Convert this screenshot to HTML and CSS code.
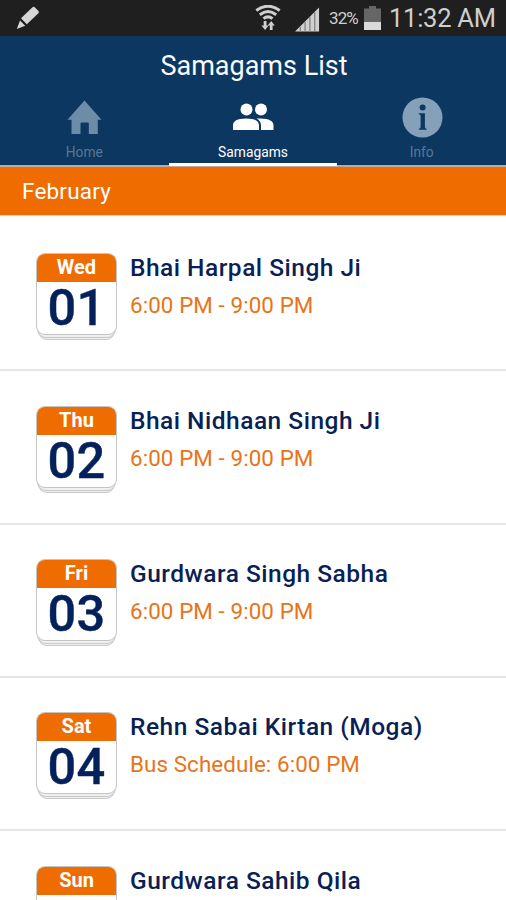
FILE: index.html
```html
<!DOCTYPE html>
<html lang="en">
<head>
  <meta charset="UTF-8" />
  <title>Samagams List</title>
  <link rel="stylesheet" href="styles.css">
</head>
<body>
  <div class="status-bar">
    <svg class="pencil" width="24" height="24" viewBox="0 0 24 24">
      <path d="M16.500 1.200Q17.800 .2 19 1.500L22.500 5Q23.400 6.200 22.400 7.300L10.800 18.300 5 12.300Z" fill="#d6d6d6"/>
      <path d="M4 14.600L9.200 19.700 0.800 23Z" fill="#d6d6d6"/>
    </svg>
    <svg class="wifi" width="26" height="26" viewBox="0 0 26 26">
      <g fill="none" stroke="#cfcfcf" stroke-width="3">
        <path d="M1.300 5.500Q13 -3 24.700 5.500"/>
        <path d="M4.800 9.700Q13 3.400 21.200 9.700"/>
        <path d="M8.500 13.700Q13 10 17.500 13.700"/>
      </g>
      <path d="M8.700 16h2.800v4.500h2.100L10.100 25 6.400 20.500H8.700ZM14.800 25h2.800v-4.500h2.200L16.200 16l-3.500 4.500H14.800Z" fill="#cfcfcf"/>
    </svg>
    <svg class="signal" width="25" height="25" viewBox="0 0 26 25">
      <path d="M0 25L25 0V25Z" fill="#cfcfcf"/>
      <path d="M5.500 20v5M10.500 15v10M15.500 10v15M20.500 5v20" stroke="#858585" stroke-width="1.400"/>
    </svg>
    <span class="percent">32%</span>
    <svg class="battery" width="17" height="24" viewBox="0 0 17 24">
      <path d="M5 0h7v2.500h5V24H0V2.500h5Z" fill="#666"/>
      <path d="M0 16h17v8H0Z" fill="#dadada"/>
    </svg>
    <span class="clock">11:32 AM</span>
  </div>

  <header>Samagams List</header>

  <nav class="tabs">
    <div class="tab">
      <svg width="40" height="42" viewBox="0 0 40 42">
        <path d="M20.500 3.500L37.500 22.700H33.800V37H24.800V26.500Q24.800 25.500 23.800 25.500H17.500Q16.500 25.500 16.500 26.500V37H7.500V22.700H3.500Z" fill="#6d8ca8"/>
      </svg>
      <span>Home</span>
    </div>
    <div class="tab active">
      <svg width="42" height="42" viewBox="0 0 42 42">
        <g fill="#fff">
          <circle cx="14.500" cy="12.500" r="6"/>
          <circle cx="29" cy="12.500" r="6"/>
          <path d="M1 33V28.500Q1 21.500 14 21.500T27 28.500V33Z"/>
          <path d="M24.500 21.600Q29 24 29 28.500V33H41.500V28.500Q41.500 21.800 28.500 21.500Z"/>
        </g>
      </svg>
      <span>Samagams</span>
    </div>
    <div class="tab">
      <svg width="42" height="42" viewBox="0 0 42 42">
        <circle cx="21.500" cy="20.500" r="20" fill="#85a0b9"/>
        <circle cx="21.600" cy="10.400" r="3" fill="#0c3761"/>
        <path d="M17.800 16.200H23.900V30Q23.900 31.500 25.600 31.700V32.700H17.800V31.700Q19.600 31.500 19.600 30V18.700Q19.600 17.500 17.800 17.300Z" fill="#0c3761"/>
      </svg>
      <span>Info</span>
    </div>
  </nav>

  <div class="month">February</div>

  <div class="list">
    <div class="item">
      <div class="calendar">
        <div class="page">
          <div class="day">Wed</div>
          <div class="date">01</div>
        </div>
      </div>
      <div class="details">
        <h3>Bhai Harpal Singh Ji</h3>
        <p>6:00 PM - 9:00 PM</p>
      </div>
    </div>
    <div class="item">
      <div class="calendar">
        <div class="page">
          <div class="day">Thu</div>
          <div class="date">02</div>
        </div>
      </div>
      <div class="details">
        <h3>Bhai Nidhaan Singh Ji</h3>
        <p>6:00 PM - 9:00 PM</p>
      </div>
    </div>
    <div class="item">
      <div class="calendar">
        <div class="page">
          <div class="day">Fri</div>
          <div class="date">03</div>
        </div>
      </div>
      <div class="details">
        <h3>Gurdwara Singh Sabha</h3>
        <p>6:00 PM - 9:00 PM</p>
      </div>
    </div>
    <div class="item">
      <div class="calendar">
        <div class="page">
          <div class="day">Sat</div>
          <div class="date">04</div>
        </div>
      </div>
      <div class="details">
        <h3>Rehn Sabai Kirtan (Moga)</h3>
        <p>Bus Schedule: 6:00 PM</p>
      </div>
    </div>
    <div class="item">
      <div class="calendar">
        <div class="page">
          <div class="day">Sun</div>
        </div>
      </div>
      <div class="details">
        <h3>Gurdwara Sahib Qila</h3>
      </div>
    </div>
  </div>
</body>
</html>
```
FILE: styles.css
```css
body {
  display: flex;
  flex-direction: column;
  margin: 0;
  height: 900px;
  overflow: hidden;
  font-family: Roboto, sans-serif;
  background-color: #fff;
}

.status-bar {
  display: flex;
  flex: none;
  align-items: flex-start;
  box-sizing: border-box;
  height: 36px;
  padding: 6px 0 0 16px;
  background-color: #1f1f1f;
  color: #cfcfcf;
}

.wifi {
  margin: -1px 0 0 215px;
}

.signal {
  margin: 1px 0 0 14px;
}

.percent {
  width: 30px;
  margin-left: 9px;
  font-size: 17px;
  line-height: 25px;
  letter-spacing: -0.9px;
}

.battery {
  margin-left: 5px;
}

.clock {
  margin-left: 8px;
  font-size: 25.5px;
  line-height: 24px;
  letter-spacing: -0.25px;
  white-space: nowrap;
}

header {
  flex: none;
  height: 60px;
  background-color: #0c3761;
  color: #f9fafb;
  font-size: 27px;
  line-height: 61px;
  text-align: center;
  text-indent: 2px;
}

.tabs {
  display: flex;
  flex: none;
  height: 69px;
  border-bottom: 2px solid #c3a79c;
  background-color: #0c3761;
}

.tab {
  display: flex;
  flex: 1;
  flex-direction: column;
  align-items: center;
  box-sizing: border-box;
  height: 70px;
  padding-top: 1px;
  border-bottom: 3px solid transparent;
  color: #587796;
  font-size: 13.8px;
  line-height: 26px;
}

.tab svg {
  flex: none;
}

.tab.active {
  border-bottom-color: #fff;
  color: #fff;
}

.month {
  flex: none;
  height: 48px;
  padding-left: 22px;
  border-bottom: 1px solid #f9cfae;
  background-color: #ee6c00;
  color: #fff;
  font-size: 22.5px;
  line-height: 48px;
  letter-spacing: 0.2px;
}

.list {
  flex: 1;
  min-height: 0;
  overflow: hidden;
}

.item {
  display: flex;
  box-sizing: border-box;
  height: 153.250px;
  padding: 34.5px 0 0 36px;
  border-top: 2px solid #e6e6e6;
}

.item:first-child {
  border-color: transparent;
}

.item:last-child {
  height: 71px;
}

/* stacked sheets under the top page */
.calendar {
  position: relative;
  box-sizing: border-box;
  width: 81px;
  height: 82px;
}

.calendar::before,
.calendar::after {
  content: "";
  position: absolute;
  left: 1px;
  right: 1px;
  bottom: -3px;
  height: 30px;
  box-sizing: border-box;
  border: 1px solid #c8c8c8;
  border-radius: 0 0 9px 9px;
  background-color: #f0f0f0;
}

.calendar::before {
  left: 2px;
  right: 2px;
  bottom: -5px;
}

.page {
  position: relative;
  z-index: 1;
  box-sizing: border-box;
  height: 82px;
  border: 1px solid #c4c4c4;
  border-radius: 9px;
  background-color: #fff;
  text-align: center;
}

.day {
  height: 28px;
  border-radius: 8px 8px 0 0;
  background-color: #ee6c00;
  color: #fff;
  font-size: 20px;
  font-weight: 700;
  line-height: 27px;
}

.date {
  color: #04215c;
  font-size: 50.5px;
  font-weight: 500;
  line-height: 52px;
  letter-spacing: 0.4px;
  -webkit-text-stroke: 0.4px #04215c;
}

.details {
  margin-left: 13px;
}

.details h3 {
  margin: 0;
  color: #0a1f56;
  font-size: 24.5px;
  font-weight: 500;
  line-height: 30px;
  letter-spacing: 0.5px;
}

.details p {
  margin: 4px 0 0;
  color: #e8741a;
  font-size: 22.4px;
  line-height: 36px;
  letter-spacing: 0.08px;
}
```
